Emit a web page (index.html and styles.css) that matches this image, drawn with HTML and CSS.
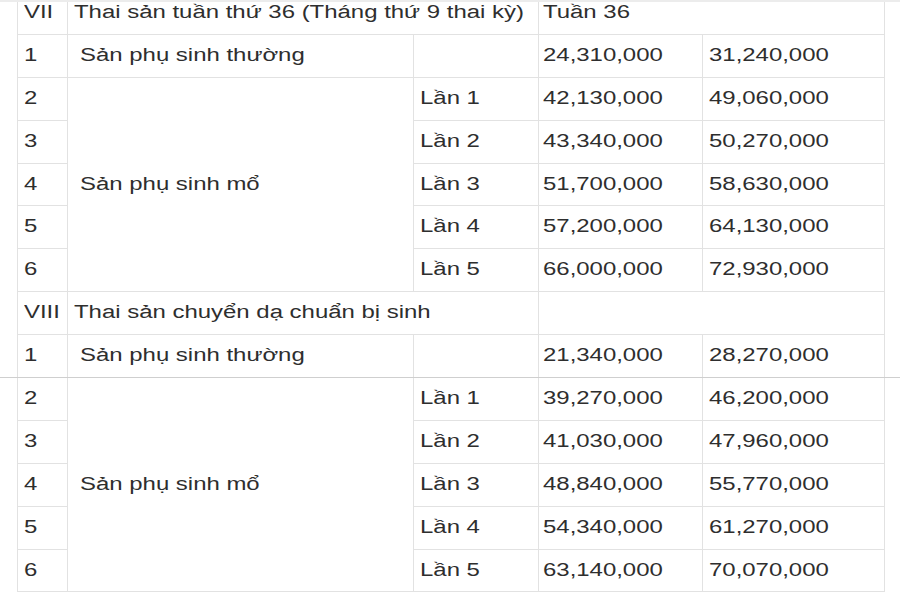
FILE: index.html
```html
<!DOCTYPE html>
<html lang="vi">
<head>
<meta charset="utf-8">
<title>Bảng giá thai sản</title>
<link rel="stylesheet" href="styles.css">
</head>
<body>
<div class="page">
<table class="price">
  <colgroup>
    <col class="c1"><col class="c2"><col class="c3"><col class="c4"><col class="c5">
  </colgroup>
  <tbody>
    <tr><td><span class="t">VII</span></td><td colspan="2"><span class="t">Thai sản tuần thứ 36 (Tháng thứ 9 thai kỳ)</span></td><td colspan="2" class="num"><span class="t">Tuần 36</span></td></tr>
    <tr><td><span class="t">1</span></td><td class="ind"><span class="t">Sản phụ sinh thường</span></td><td></td><td class="num"><span class="t">24,310,000</span></td><td class="num2"><span class="t">31,240,000</span></td></tr>
    <tr><td><span class="t">2</span></td><td rowspan="5" class="ind"><span class="t">Sản phụ sinh mổ</span></td><td><span class="t">Lần 1</span></td><td class="num"><span class="t">42,130,000</span></td><td class="num2"><span class="t">49,060,000</span></td></tr>
    <tr><td><span class="t">3</span></td><td><span class="t">Lần 2</span></td><td class="num"><span class="t">43,340,000</span></td><td class="num2"><span class="t">50,270,000</span></td></tr>
    <tr><td><span class="t">4</span></td><td><span class="t">Lần 3</span></td><td class="num"><span class="t">51,700,000</span></td><td class="num2"><span class="t">58,630,000</span></td></tr>
    <tr><td><span class="t">5</span></td><td><span class="t">Lần 4</span></td><td class="num"><span class="t">57,200,000</span></td><td class="num2"><span class="t">64,130,000</span></td></tr>
    <tr><td><span class="t">6</span></td><td><span class="t">Lần 5</span></td><td class="num"><span class="t">66,000,000</span></td><td class="num2"><span class="t">72,930,000</span></td></tr>
    <tr><td><span class="t">VIII</span></td><td colspan="2"><span class="t">Thai sản chuyển dạ chuẩn bị sinh</span></td><td colspan="2"></td></tr>
    <tr><td><span class="t">1</span></td><td class="ind"><span class="t">Sản phụ sinh thường</span></td><td></td><td class="num"><span class="t">21,340,000</span></td><td class="num2"><span class="t">28,270,000</span></td></tr>
    <tr><td><span class="t">2</span></td><td rowspan="5" class="ind"><span class="t">Sản phụ sinh mổ</span></td><td><span class="t">Lần 1</span></td><td class="num"><span class="t">39,270,000</span></td><td class="num2"><span class="t">46,200,000</span></td></tr>
    <tr><td><span class="t">3</span></td><td><span class="t">Lần 2</span></td><td class="num"><span class="t">41,030,000</span></td><td class="num2"><span class="t">47,960,000</span></td></tr>
    <tr><td><span class="t">4</span></td><td><span class="t">Lần 3</span></td><td class="num"><span class="t">48,840,000</span></td><td class="num2"><span class="t">55,770,000</span></td></tr>
    <tr><td><span class="t">5</span></td><td><span class="t">Lần 4</span></td><td class="num"><span class="t">54,340,000</span></td><td class="num2"><span class="t">61,270,000</span></td></tr>
    <tr><td><span class="t">6</span></td><td><span class="t">Lần 5</span></td><td class="num"><span class="t">63,140,000</span></td><td class="num2"><span class="t">70,070,000</span></td></tr>
  </tbody>
</table>
<div class="seam-line"></div>
<div class="top-line"></div>
</div>
</body>
</html>
```
FILE: styles.css
```css
html, body {
  margin: 0;
  padding: 0;
  background: #ffffff;
}
body {
  width: 900px;
  height: 600px;
  overflow: hidden;
  font-family: "Liberation Sans", Arial, sans-serif;
  color: #2e2e2e;
}
.page {
  position: relative;
  width: 900px;
  height: 600px;
  overflow: hidden;
}
.price {
  border-collapse: collapse;
  table-layout: fixed;
  width: 867px;
  margin: -9px 0 0 17px;
  font-size: 18px;
}
.c1 { width: 50px; }
.c2 { width: 346px; }
.c3 { width: 125px; }
.c4 { width: 164px; }
.c5 { width: 182px; }
.price tr {
  height: 42.9px;
}
.price td {
  border: 1px solid #e2e2e2;
  padding: 0 0 2px 6px;
  vertical-align: middle;
  white-space: nowrap;
  overflow: visible;
  line-height: 20px;
}
.price td.ind {
  padding-left: 12px;
}
.price td.num {
  padding-left: 4px;
}
.price td.num2 {
  padding-left: 6px;
}
.t {
  display: inline-block;
  transform: scaleX(1.33);
  transform-origin: left center;
}
.seam-line {
  position: absolute;
  left: 0;
  top: 377px;
  width: 900px;
  height: 1px;
  background: #cfcfcf;
}
.top-line {
  position: absolute;
  left: 0;
  top: 0;
  width: 900px;
  height: 2px;
  background: #ececec;
}
```
